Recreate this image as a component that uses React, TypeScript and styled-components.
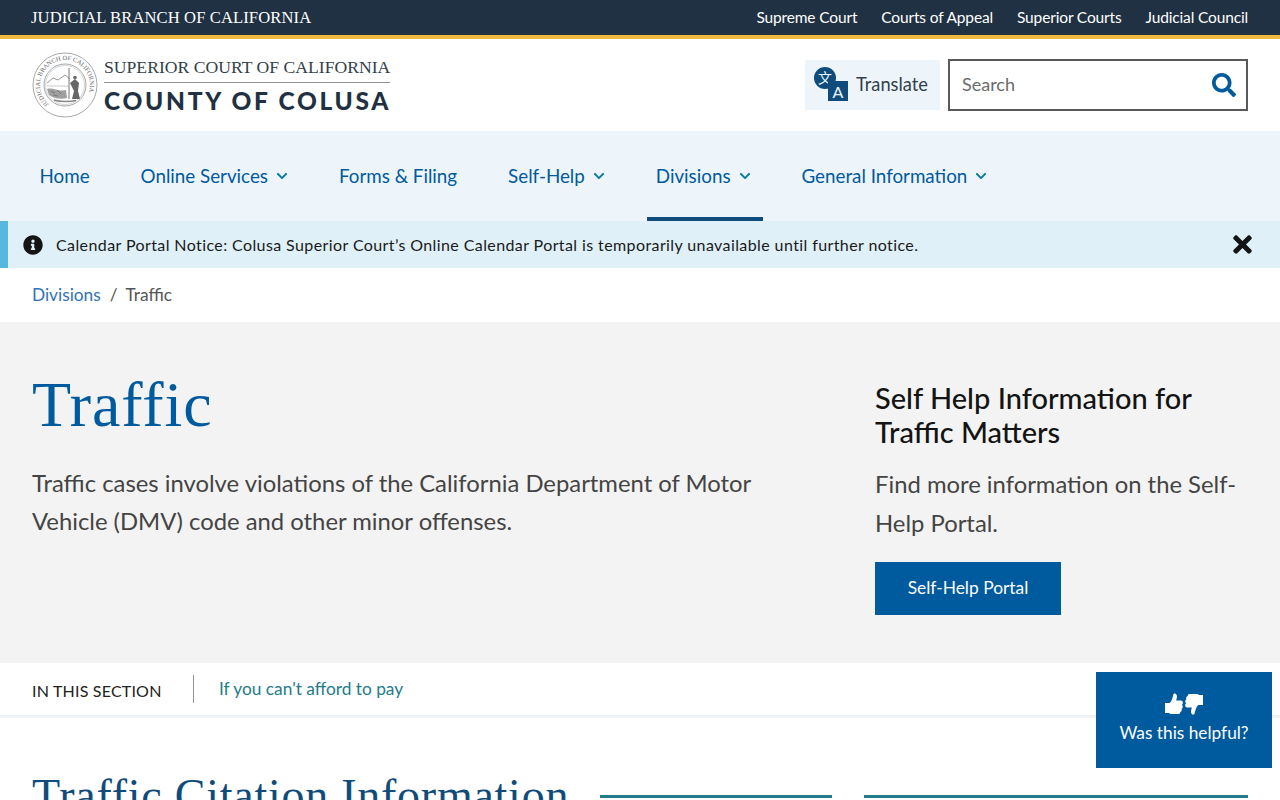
import React from "react";
import styled, { createGlobalStyle } from "styled-components";
import { FaSearch, FaInfoCircle, FaTimes, FaChevronDown } from "react-icons/fa";

const Global = createGlobalStyle`
  html, body { margin: 0; padding: 0; background: #fff; }
  body { font-family: Lato, "Liberation Sans", sans-serif; overflow: hidden; height: 800px; }
  * { box-sizing: border-box; }
  a { text-decoration: none; }
`;

const Page = styled.div`
  width: 1280px;
  height: 800px;
  overflow: hidden;
`;

const TopBar = styled.div`
  height: 39px;
  background: #1f3142;
  border-bottom: 4px solid #f0b93f;
  display: flex;
  align-items: center;
  justify-content: space-between;
  padding: 0 32px 0 31px;
`;

const Branch = styled.span`
  font-family: "Liberation Serif", serif;
  font-size: 16.6px;
  color: #fff;
  letter-spacing: 0.1px;
`;

const TopLinks = styled.nav`
  display: flex;
  gap: 24px;
  margin-top: -1px;
`;

const TopLink = styled.a`
  color: #fff;
  font-size: 15.5px;
  letter-spacing: -0.15px;
`;

const Header = styled.header`
  height: 92px;
  display: flex;
  align-items: center;
  justify-content: space-between;
  padding: 0 32px;
`;

const Logo = styled.div`
  display: flex;
  align-items: center;
  gap: 6px;
`;

const LogoText = styled.div`
  display: flex;
  flex-direction: column;
  width: 286px;
  margin-top: 2px;
`;

const LogoTop = styled.div`
  font-family: "Liberation Serif", serif;
  font-size: 17.65px;
  line-height: 21px;
  color: #333f49;
  white-space: nowrap;
  border-bottom: 1px solid #8d9398;
  padding-bottom: 4px;
`;

const LogoBottom = styled.div`
  font-size: 24.5px;
  line-height: 30px;
  font-weight: 900;
  letter-spacing: 2.7px;
  color: #1f3142;
  white-space: nowrap;
  margin-top: 3px;
`;

const Tools = styled.div`
  display: flex;
  align-items: center;
  gap: 8px;
`;

const Translate = styled.button`
  width: 135px;
  height: 50px;
  background: #edf5fb;
  border: 0;
  display: flex;
  align-items: center;
  gap: 7px;
  padding: 0 0 2px 9px;
  font: 400 18.3px Lato, sans-serif;
  color: #333f49;
`;

const Search = styled.div`
  width: 300px;
  height: 52px;
  border: 2px solid #58595b;
  display: flex;
  align-items: center;
  justify-content: space-between;
  padding: 0 10px 2px 12px;
  font-size: 18px;
  color: #6b6b6b;
  svg { color: #005a9e; margin-top: 2px; }
`;

const Nav = styled.nav`
  height: 90px;
  background: #edf5fb;
  display: flex;
  padding-left: 30.5px;
  gap: 30px;
`;

const NavItem = styled.a<{ $active?: boolean }>`
  display: flex;
  align-items: center;
  gap: 8px;
  padding: 3px 12px 0 9px;
  height: 90px;
  font-size: 18.8px;
  color: #005a9e;
  border-bottom: 4px solid ${(p) => (p.$active ? "#0f4c7b" : "transparent")};
  svg { color: #0a7c9c; }
`;

const Alert = styled.div`
  height: 47px;
  background: #dff0f8;
  border-left: 8px solid #57b8dd;
  display: flex;
  align-items: center;
  padding: 0 24px 0 15px;
  font-size: 16px;
  color: #1a1a1a;
  letter-spacing: 0.4px;
`;

const AlertText = styled.span`
  flex: 1;
  margin-left: 13px;
`;

const Crumbs = styled.div`
  height: 54px;
  display: flex;
  align-items: center;
  padding: 0 0 2px 32px;
  font-size: 17.3px;
  color: #555;
`;

const Crumb = styled.a`
  color: #2f73b2;
`;

const Sep = styled.span`
  margin: 0 8px 0 9px;
`;

const Hero = styled.section`
  height: 341px;
  background: #f3f3f3;
  display: flex;
  padding: 44px 32px 0;
`;

const HeroMain = styled.div`
  width: 843px;
`;

const Title = styled.h1`
  margin: 0;
  font-family: "Liberation Serif", serif;
  font-weight: 400;
  font-size: 64px;
  line-height: 77px;
  letter-spacing: 0.9px;
  color: #005a9e;
`;

const Lead = styled.p`
  margin: 21px 0 0;
  width: 760px;
  font-size: 23.83px;
  line-height: 38px;
  color: #444;
`;

const HeroSide = styled.aside`
  width: 373px;
  padding-top: 15px;
`;

const SideTitle = styled.h2`
  margin: 0;
  font-size: 29px;
  line-height: 34px;
  font-weight: 500;
  color: #141414;
`;

const SideText = styled.p`
  margin: 15px 0 20px;
  font-size: 23.83px;
  line-height: 39px;
  color: #444;
`;

const Cta = styled.a`
  display: inline-flex;
  align-items: center;
  justify-content: center;
  width: 186px;
  height: 53px;
  padding-bottom: 3px;
  background: #005a9e;
  color: #fff;
  font-size: 17.4px;
`;

const SectionNav = styled.div`
  height: 55px;
  border-bottom: 3px solid #eef2f4;
  display: flex;
  align-items: center;
  padding: 0 32px;
`;

const SectionLabel = styled.span`
  font-size: 16px;
  letter-spacing: 0.2px;
  color: #222;
  width: 161px;
  margin-top: 3px;
`;

const SectionDivider = styled.span`
  width: 1px;
  height: 28px;
  background: #8d9398;
  margin: 0 25px 0 0;
`;

const SectionLink = styled.a`
  font-size: 17.3px;
  color: #237c8a;
  margin-top: -1px;
`;

const Body = styled.div`
  display: flex;
  padding: 53px 32px 0;
`;

const BodyTitle = styled.h2`
  margin: 0;
  width: 568px;
  font-family: "Liberation Serif", serif;
  font-weight: 400;
  font-size: 46px;
  line-height: 50px;
  letter-spacing: 0.75px;
  color: #0f4c7b;
  white-space: nowrap;
`;

const RuleCol = styled.div<{ $w: number }>`
  width: ${(p) => p.$w}px;
  height: 3px;
  margin-top: 24px;
  background: #237c8a;
`;

const BodyCols = styled.div`
  display: flex;
  gap: 32px;
`;

const Feedback = styled.button`
  position: fixed;
  left: 1096px;
  top: 672px;
  width: 176px;
  height: 96px;
  border: 0;
  background: #005a9e;
  color: #fff;
  font: 400 17.3px Lato, sans-serif;
  display: flex;
  flex-direction: column;
  align-items: center;
  justify-content: center;
  gap: 6px;
  padding: 0 0 5px;
`;

const Thumbs = styled.span`
  display: flex;
  gap: 2px;
  height: 23px;
  align-items: flex-start;
`;

const ThumbDown = styled.svg`
  transform: rotate(180deg);
  margin-top: 1px;
`;

const thumbPath =
  "M0 10 H4.5 C6.5 9 7.6 5 8.6 .8 C10.6 -.4 12.2 1.6 12 4 L11.2 7.6 H16 C18.2 7.6 18.4 10.6 17 11.8 C18.2 13 18 15 16.6 15.8 C17.2 17.4 16.4 18.6 15.2 19.2 C15.2 20.6 14.2 21 13 21 H5.5 L4 20 H0 Z";

const Seal = () => (
  <svg width="66" height="66" viewBox="0 0 66 66" fill="none" aria-hidden>
    <circle cx="33" cy="33" r="32" stroke="#8d9398" strokeWidth="0.8" />
    <circle cx="33" cy="33" r="21" stroke="#8d9398" strokeWidth="0.8" />
    <circle cx="33" cy="33" r="19.5" stroke="#aaa" strokeWidth="0.5" />
    <defs>
      <path id="sealArc" d="M 17 52.2 A 25 25 0 1 1 49 52.2" />
    </defs>
    <text fontFamily="'Liberation Serif', serif" fontSize="6.4" fill="#666">
      <textPath href="#sealArc">JUDICIAL BRANCH OF CALIFORNIA</textPath>
    </text>
    <path d="M15 31 L21 26 L26 28 L33 23 L38 27" stroke="#999" strokeWidth="1" />
    <path d="M15 34 H36" stroke="#bbb" strokeWidth="0.8" />
    <path d="M15 37 C20 35 27 40 34 38 L35 46 C28 48 21 46 17 43 Z" fill="#a0a0a0" />
    <path d="M19 39 L23 41 M25 38 L29 42 M21 43 L26 44" stroke="#666" strokeWidth="0.7" />
    <path d="M37 16 L37 47" stroke="#666" strokeWidth="0.9" />
    <path d="M38 31 L43 27 L47 31 L46 39 L48 47 L40 47 L42 39 Z" fill="#666" />
    <circle cx="43" cy="25.5" r="1.8" fill="#666" />
    <path d="M22 48 C28 50 38 50 44 48.5" stroke="#888" strokeWidth="1.4" />
  </svg>
);

const TranslateIcon = () => (
  <svg width="35" height="35" viewBox="0 0 35 35" aria-hidden>
    <circle cx="11" cy="11" r="11" fill="#0f4c7b" />
    <text x="11" y="16" textAnchor="middle" fontFamily="'Noto Sans CJK SC', sans-serif" fontSize="14" fill="#edf5fb">文</text>
    <rect x="14" y="14" width="20" height="20" fill="#0f4c7b" />
    <text x="24" y="31" textAnchor="middle" fontFamily="Lato, sans-serif" fontSize="16" fill="#edf5fb">A</text>
  </svg>
);

export default function App() {
  const nav: [string, boolean, boolean][] = [
    ["Home", false, false],
    ["Online Services", true, false],
    ["Forms & Filing", false, false],
    ["Self-Help", true, false],
    ["Divisions", true, true],
    ["General Information", true, false],
  ];
  return (
    <Page>
      <Global />
      <TopBar>
        <Branch>JUDICIAL BRANCH OF CALIFORNIA</Branch>
        <TopLinks>
          <TopLink>Supreme Court</TopLink>
          <TopLink>Courts of Appeal</TopLink>
          <TopLink>Superior Courts</TopLink>
          <TopLink>Judicial Council</TopLink>
        </TopLinks>
      </TopBar>
      <Header>
        <Logo>
          <Seal />
          <LogoText>
            <LogoTop>SUPERIOR COURT OF CALIFORNIA</LogoTop>
            <LogoBottom>COUNTY OF COLUSA</LogoBottom>
          </LogoText>
        </Logo>
        <Tools>
          <Translate>
            <TranslateIcon />
            Translate
          </Translate>
          <Search>
            Search
            <FaSearch size={24} />
          </Search>
        </Tools>
      </Header>
      <Nav>
        {nav.map(([label, chev, active]) => (
          <NavItem key={label} $active={active}>
            {label}
            {chev && <FaChevronDown size={12} />}
          </NavItem>
        ))}
      </Nav>
      <Alert>
        <FaInfoCircle size={20} color="#141414" />
        <AlertText>Calendar Portal Notice: Colusa Superior Court’s Online Calendar Portal is temporarily unavailable until further notice.</AlertText>
        <FaTimes size={27} color="#141414" />
      </Alert>
      <Crumbs>
        <Crumb>Divisions</Crumb>
        <Sep>/</Sep>
        Traffic
      </Crumbs>
      <Hero>
        <HeroMain>
          <Title>Traffic</Title>
          <Lead>Traffic cases involve violations of the California Department of Motor Vehicle (DMV) code and other minor offenses.</Lead>
        </HeroMain>
        <HeroSide>
          <SideTitle>Self Help Information for Traffic Matters</SideTitle>
          <SideText>Find more information on the Self-Help Portal.</SideText>
          <Cta>Self-Help Portal</Cta>
        </HeroSide>
      </Hero>
      <SectionNav>
        <SectionLabel>IN THIS SECTION</SectionLabel>
        <SectionDivider />
        <SectionLink>If you can't afford to pay</SectionLink>
      </SectionNav>
      <Body>
        <BodyTitle>Traffic Citation Information</BodyTitle>
        <BodyCols>
          <RuleCol $w={232} />
          <RuleCol $w={384} />
        </BodyCols>
      </Body>
      <Feedback>
        <Thumbs>
          <svg width="18" height="21" viewBox="0 0 18 21" fill="#fff" aria-hidden><path d={thumbPath} /></svg>
          <ThumbDown width="18" height="21" viewBox="0 0 18 21" fill="#fff" aria-hidden><path d={thumbPath} /></ThumbDown>
        </Thumbs>
        Was this helpful?
      </Feedback>
    </Page>
  );
}
